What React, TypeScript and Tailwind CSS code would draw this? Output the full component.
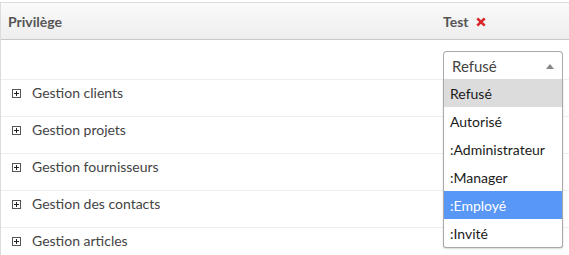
import React from "react";

const rows = [
  "Gestion clients",
  "Gestion projets",
  "Gestion fournisseurs",
  "Gestion des contacts",
  "Gestion articles",
];

const options = [
  "Refusé",
  "Autorisé",
  ":Administrateur",
  ":Manager",
  ":Employé",
  ":Invité",
];

function PlusBox() {
  return (
    <svg width="9" height="9" viewBox="0 0 9 9" className="shrink-0">
      <rect x="0.5" y="0.5" width="8" height="8" fill="#fff" stroke="#555" />
      <path d="M2 4.5h5M4.5 2v5" stroke="#222" strokeWidth="1" />
    </svg>
  );
}

function RedX({ className = "" }: { className?: string }) {
  return (
    <svg width="10" height="10" viewBox="0 0 10 10" className={className}>
      <path d="M1.3 1.3L8.7 8.7M8.7 1.3L1.3 8.7" stroke="#d8262b" strokeWidth="2.6" strokeLinecap="butt" />
    </svg>
  );
}

export default function App() {
  return (
    <div
      className="w-[569px] h-[255px] overflow-hidden bg-white pt-[2px] text-[14px]"
      style={{ fontFamily: "Lato, 'Open Sans', sans-serif" }}
    >
      <div className="relative border-l border-t border-[#dcdcdc]">
        {/* header */}
        <div className="flex h-[37px] items-center border-b border-[#c8c8c8] bg-gradient-to-b from-[#fafafa] to-[#eeeeee]">
          <div className="w-[435px] pl-[7px] font-bold text-[#555]">Privilège</div>
          <div className="flex items-center gap-[7px] pl-[7px] font-bold text-[#555]">
            <span>Test</span>
            <RedX className="mt-[1px]" />
          </div>
        </div>
        {/* filter row */}
        <div className="flex h-[40px] border-b border-[#eeeeee]">
          <div className="w-[435px]" />
          <div className="relative pl-[7px] pt-[11px]">
            <div className="relative z-10 w-[120px]">
              <div className="flex h-[29px] items-center justify-between rounded-t-[4px] border border-b-0 border-[#a9a9a9] bg-white pl-[8px] pr-[8px] text-[15px] text-[#444]">
                <span>Refusé</span>
                <svg width="8" height="5" viewBox="0 0 8 5">
                  <path d="M0 5L4 0L8 5Z" fill="#888" />
                </svg>
              </div>
              <div className="absolute left-0 top-[28px] w-[120px] rounded-b-[3px] border border-t-0 border-[#a9a9a9] bg-white text-[14px] text-[#1a1a1a] shadow-[0_1px_2px_rgba(0,0,0,0.15)]">
                {options.map((o, i) => (
                  <div
                    key={o}
                    className={
                      "flex h-[28px] items-center pl-[6px] " +
                      (i === 0
                        ? "bg-[#dcdcdc]"
                        : i === 4
                        ? "bg-[#5897f5] text-white"
                        : "")
                    }
                  >
                    {o}
                  </div>
                ))}
              </div>
            </div>
          </div>
        </div>
        {/* rows */}
        {rows.map((r) => (
          <div key={r} className="flex h-[37px] border-b border-[#eeeeee]">
            <div className="flex w-[435px] items-start gap-[11px] pl-[11px] pt-[4px] text-[#444]">
              <span className="mt-[5px]">
                <PlusBox />
              </span>
              <span className="leading-[18px]">{r}</span>
            </div>
            <div className="pl-[10px] pt-[8px]">
              <RedX className="opacity-25" />
            </div>
          </div>
        ))}
      </div>
    </div>
  );
}
